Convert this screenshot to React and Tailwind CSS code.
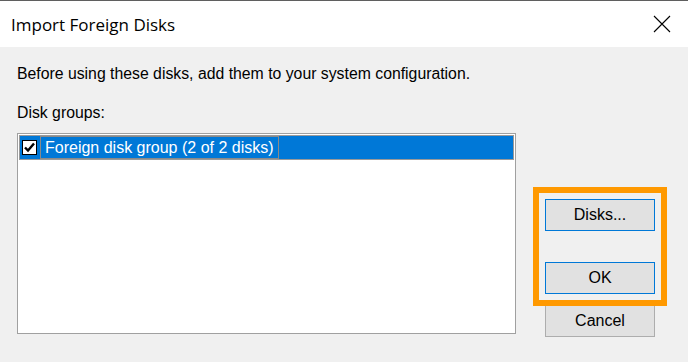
import React from "react";

function Button({ label, focused }) {
  return (
    <button
      className={
        "h-[32px] w-[110px] bg-[#e1e1e1] text-[16px] text-black border " +
        (focused ? "border-[#0078d7]" : "border-[#adadad]")
      }
      style={{ fontFamily: '"Liberation Sans", Arial, sans-serif' }}
    >
      {label}
    </button>
  );
}

export default function App() {
  return (
    <div
      className="relative w-[688px] h-[362px] bg-[#f0f0f0] overflow-hidden"
      style={{ fontFamily: '"Liberation Sans", Arial, sans-serif' }}
    >
      {/* Title bar */}
      <div className="h-[47px] bg-white border-t border-[#5f5f5f] flex items-center justify-between pl-[11px] pr-[17px]">
        <span
          className="text-[17px] text-black mt-[1px]"
          style={{ fontFamily: '"Open Sans", "Noto Sans", sans-serif' }}
        >
          Import Foreign Disks
        </span>
        <svg width="18" height="18" viewBox="0 0 18 18" className="mt-[-1px]">
          <path d="M1 1 L17 17 M17 1 L1 17" stroke="#000" strokeWidth="1.1" fill="none" />
        </svg>
      </div>

      {/* Body */}
      <div className="pl-[17px] pt-[18px]">
        <p className="text-[15.8px] leading-[18px] text-black">
          Before using these disks, add them to your system configuration.
        </p>
        <p className="text-[15.8px] leading-[18px] text-black mt-[21px]">Disk groups:</p>

        <div className="flex mt-[11px]">
          <div className="w-[499px] h-[201px] bg-white border border-[#a0a0a0] p-px">
            <div className="h-[25px] bg-[#0078d7] flex items-center outline outline-1 outline-[#9a9a9a] -outline-offset-1">
              <div className="ml-[3px] w-[15px] h-[15px] bg-white border border-black flex items-center justify-center">
                <svg width="13" height="13" viewBox="0 0 13 13">
                  <path d="M2 6.5 L5 9.5 L11 2.5" stroke="#000" strokeWidth="2.4" fill="none" />
                </svg>
              </div>
              <span className="ml-[3px] h-[23px] flex items-center px-[4px] border border-[#8a8a8a] text-white text-[16px]">
                Foreign disk group (2 of 2 disks)
              </span>
            </div>
          </div>

          <div className="ml-[29px] pt-[66px] flex flex-col">
            <Button label="Disks..." focused />
            <div className="mt-[31px]">
              <Button label="OK" focused />
            </div>
            <div className="mt-[11px]">
              <Button label="Cancel" />
            </div>
          </div>
        </div>
      </div>

      {/* Annotation highlight */}
      <div className="absolute left-[533px] top-[187px] w-[134px] h-[119px] border-[6px] border-[#ff9900] pointer-events-none" />
    </div>
  );
}
